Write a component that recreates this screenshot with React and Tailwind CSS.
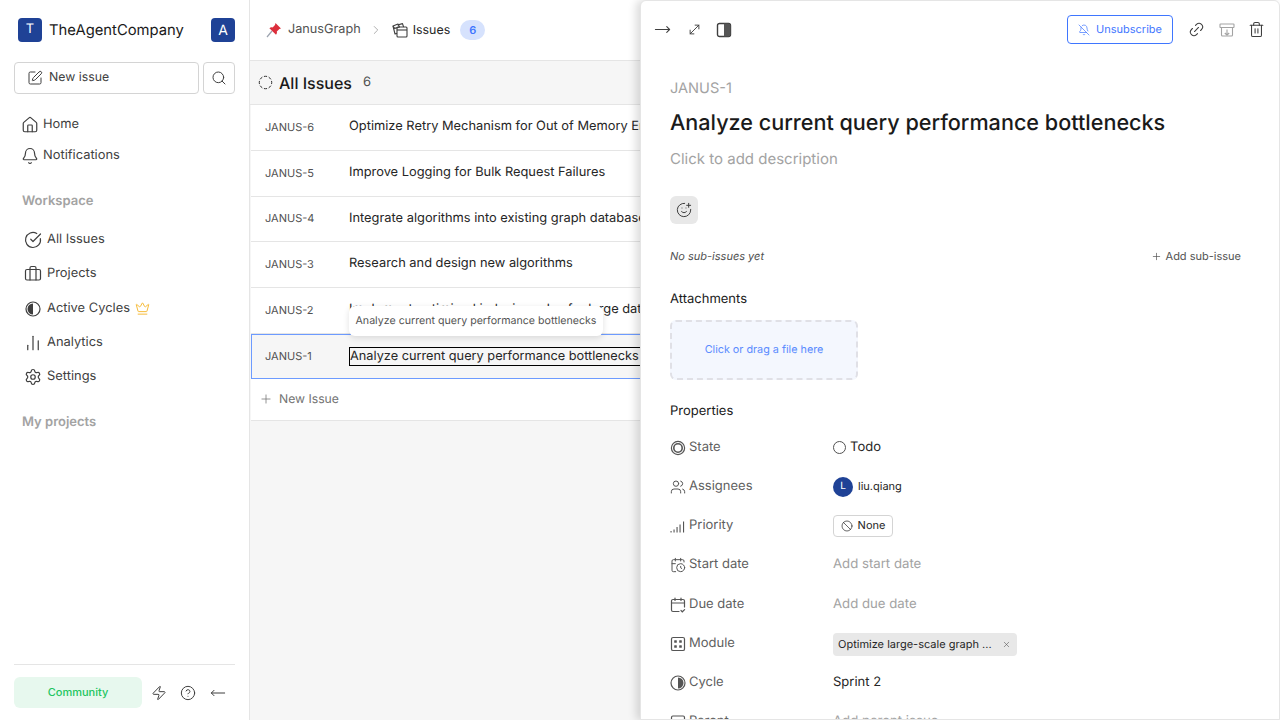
import {
  SquarePen, Search, House, Bell, CircleCheckBig, Briefcase, ChartNoAxesColumn, Settings, Crown,
  Zap, CircleHelp, ChevronRight, CircleDashed, Plus, MoveRight, MoveLeft, MoveDiagonal, BellOff, Link2, Trash2,
  SmilePlus, Users, CalendarClock, Ban, X,
} from "lucide-react";

function HalfCircle({ side = "left", size = 16, className = "" }) {
  const d = side === "left" ? "M8 2.5 A5.5 5.5 0 0 0 8 13.5 Z" : "M8 2.5 A5.5 5.5 0 0 1 8 13.5 Z";
  return (
    <svg width={size} height={size} viewBox="0 0 16 16" className={`shrink-0 ${className}`}>
      <circle cx="8" cy="8" r="7" fill="none" stroke="currentColor" strokeWidth="1.2" />
      <path d={d} fill="currentColor" />
    </svg>
  );
}

const ActiveCyclesIcon = () => <HalfCircle side="left" />;

const NAV_TOP = [
  { icon: House, label: "Home" },
  { icon: Bell, label: "Notifications" },
];

const NAV_WORKSPACE = [
  { icon: CircleCheckBig, label: "All Issues", h: "h-[34px]" },
  { icon: Briefcase, label: "Projects", h: "h-[34px]" },
  { icon: ActiveCyclesIcon, label: "Active Cycles", crown: true, h: "h-[35px]" },
  { icon: ChartNoAxesColumn, label: "Analytics", h: "h-[34px]" },
  { icon: Settings, label: "Settings", h: "h-[34px]" },
];

const ISSUES = [
  { id: "JANUS-6", title: "Optimize Retry Mechanism for Out of Memory Errors", h: "h-[46px]" },
  { id: "JANUS-5", title: "Improve Logging for Bulk Request Failures", h: "h-[46px]" },
  { id: "JANUS-4", title: "Integrate algorithms into existing graph database", h: "h-[45px]" },
  { id: "JANUS-3", title: "Research and design new algorithms", h: "h-[46px]" },
  { id: "JANUS-2", title: "Implement optimized indexing rules for large data", h: "h-[46px]" },
];

function PinIcon() {
  return (
    <svg width="16" height="16" viewBox="0 0 16 16">
      <path d="M1 15 L6 9" stroke="#9ca3af" strokeWidth="1.2" />
      <path d="M9.5 1 L15 6.5 L13.4 7 L10.8 9.6 C11.2 11 10.8 12 10 12.8 L3.4 6.2 C4.2 5.4 5.4 5 6.6 5.4 L9 3 Z" fill="#dc2f3c" />
    </svg>
  );
}

function IssuesIcon() {
  return (
    <svg width="16" height="16" viewBox="0 0 16 16" fill="none" stroke="#3f3f3f" strokeWidth="1.1" strokeLinejoin="round">
      <path d="M1 4 L6 2 L7.5 5 L2.6 6.4 Z" />
      <path d="M1 4 L3 12 L5 11.4" />
      <path d="M5.5 3 L10.5 1.6 L11.6 5" />
      <rect x="5" y="5" width="10" height="10" rx="1" />
      <path d="M5 8 H15" />
    </svg>
  );
}

function PanelIcon() {
  return (
    <svg width="16" height="16" viewBox="0 0 16 16">
      <rect x="1.5" y="1.5" width="13" height="13" rx="2" fill="none" stroke="#3f3f3f" strokeWidth="1.4" />
      <path d="M8 1.5 H12.5 A2 2 0 0 1 14.5 3.5 V12.5 A2 2 0 0 1 12.5 14.5 H8 Z" fill="#555" />
    </svg>
  );
}

function ArchiveIcon() {
  return (
    <svg width="16" height="16" viewBox="0 0 16 16" fill="none" stroke="#a3a3a3" strokeWidth="1.1" strokeLinejoin="round">
      <rect x="1" y="2" width="14" height="3.5" rx="0.6" />
      <path d="M2.5 5.5 V13 A1 1 0 0 0 3.5 14 H12.5 A1 1 0 0 0 13.5 13 V5.5" />
      <path d="M8 7.5 V13 M5.8 11 L8 13.2 L10.2 11" />
    </svg>
  );
}

function StateIcon() {
  return (
    <svg width="16" height="16" viewBox="0 0 16 16" fill="none" stroke="#555" className="shrink-0">
      <circle cx="8" cy="8" r="6.6" strokeWidth="1.2" />
      <circle cx="8" cy="8" r="4.2" strokeWidth="1.6" />
    </svg>
  );
}

function PriorityIcon() {
  return (
    <svg width="16" height="16" viewBox="0 0 16 16" fill="#555" className="shrink-0">
      <rect x="0.5" y="13" width="1.1" height="1.5" />
      <rect x="3.5" y="11.5" width="1.1" height="3" />
      <rect x="6.5" y="9" width="1.1" height="5.5" />
      <rect x="9.5" y="6.5" width="1.1" height="8" />
      <rect x="13" y="3.5" width="1.1" height="11" />
    </svg>
  );
}

function DueIcon() {
  return (
    <svg width="16" height="16" viewBox="0 0 16 16" fill="none" stroke="#555" strokeWidth="1.2" strokeLinecap="round" className="shrink-0">
      <path d="M9 14.5 H3 A1.5 1.5 0 0 1 1.5 13 V4 A1.5 1.5 0 0 1 3 2.5 H13 A1.5 1.5 0 0 1 14.5 4 V10" />
      <path d="M1.5 6 H14.5 M5 1 V3.5 M11 1 V3.5" />
      <path d="M11 13.5 L12.3 14.8 L14.6 12.6" />
    </svg>
  );
}

function ModuleIcon() {
  return (
    <svg width="16" height="16" viewBox="0 0 16 16" className="shrink-0">
      <rect x="1.5" y="1.5" width="13" height="13" rx="1.6" fill="none" stroke="#555" strokeWidth="1.2" />
      <rect x="4.2" y="4.2" width="2.6" height="2.6" rx="0.5" fill="#555" />
      <rect x="9.2" y="4.2" width="2.6" height="2.6" rx="0.5" fill="#555" />
      <rect x="4.2" y="9.2" width="2.6" height="2.6" rx="0.5" fill="#555" />
      <rect x="9.2" y="9.2" width="2.6" height="2.6" rx="0.5" fill="#555" />
    </svg>
  );
}

function ParentIcon() {
  return (
    <svg width="16" height="16" viewBox="0 0 16 16" fill="none" stroke="#555" strokeWidth="1.2" className="shrink-0">
      <rect x="1.5" y="2" width="13" height="12" rx="1.4" />
    </svg>
  );
}

function NavItem({ icon: Icon, label, crown, h, gap = "gap-[5px]", pad = "pl-[24px]" }) {
  return (
    <div className={`flex items-center ${gap} ${pad} ${h} text-[12.9px] text-[#3f3f3f]`}>
      <span className="w-[18px] h-[18px] flex items-center justify-center shrink-0">
        <Icon size={18} strokeWidth={1.6} />
      </span>
      <span>{label}</span>
      {crown && <Crown size={15} strokeWidth={1.5} className="text-[#f5b82e]" />}
    </div>
  );
}

function Sidebar() {
  return (
    <aside className="w-[250px] shrink-0 h-full flex flex-col border-r border-[#e5e5e5] bg-white">
      <div className="flex items-center justify-between h-[60px] pl-[18px] pr-[14px]">
        <div className="flex items-center gap-[7px]">
          <div className="w-6 h-6 rounded bg-[#1f4296] text-white text-[13px] flex items-center justify-center">T</div>
          <span className="text-[14.8px] text-[#1a1a1a]">TheAgentCompany</span>
        </div>
        <div className="w-6 h-6 rounded bg-[#1f4296] text-white text-[14px] flex items-center justify-center">A</div>
      </div>
      <div className="flex gap-1 px-[14px] mt-[2px]">
        <div className="flex-1 h-8 flex items-center gap-[6px] pl-3 rounded border border-[#d4d4d4] text-[12.3px] text-[#3f3f3f] pb-px">
          <SquarePen size={16} strokeWidth={1.5} />
          <span>New issue</span>
        </div>
        <div className="w-8 h-8 rounded border border-[#d4d4d4] flex items-center justify-center text-[#3f3f3f]">
          <Search size={16} strokeWidth={1.5} />
        </div>
      </div>
      <div className="mt-[15px]">
        {NAV_TOP.map((n) => (
          <NavItem key={n.label} {...n} h="h-[31px]" pad="pl-[21px]" gap="gap-[4px]" />
        ))}
      </div>
      <div className="mt-[20px] pl-[22px] text-[13px] font-semibold text-[#a3a3a3] h-[20px] leading-[20px]">Workspace</div>
      <div className="mt-[12px]">
        {NAV_WORKSPACE.map((n) => (
          <NavItem key={n.label} {...n} />
        ))}
      </div>
      <div className="mt-[18px] pl-[22px] text-[13px] font-semibold text-[#a3a3a3] h-[20px] leading-[20px]">My projects</div>
      <div className="mt-auto mx-[14px] border-t border-[#e5e5e5] h-[56px] flex items-center">
        <div className="w-[128px] h-[31px] rounded-md bg-[#e7f8ee] text-[#22c55e] text-[11px] font-medium flex items-center justify-center">Community</div>
        <Zap size={16} strokeWidth={1.5} className="ml-[9px] text-[#3f3f3f]" />
        <CircleHelp size={16} strokeWidth={1.5} className="ml-[13px] text-[#3f3f3f]" />
        <MoveLeft size={16} strokeWidth={1.5} className="ml-[14px] text-[#3f3f3f]" />
      </div>
    </aside>
  );
}

function IssueList() {
  return (
    <main className="flex-1 min-w-0 h-full flex flex-col bg-[#f6f6f6]">
      <div className="h-[61px] shrink-0 bg-white border-b border-[#e5e5e5] flex items-center pl-4">
        <PinIcon />
        <span className="ml-[6px] text-[12.7px] text-[#525252]">JanusGraph</span>
        <ChevronRight size={14} strokeWidth={1.5} className="ml-[8px] text-[#a3a3a3]" />
        <span className="ml-[9px]"><IssuesIcon /></span>
        <span className="ml-[5px] text-[12.4px] text-[#262626]">Issues</span>
        <span className="ml-[10px] w-[25px] h-5 rounded-full bg-[#d6e2fd] text-[#3f76ff] text-[11px] font-semibold flex items-center justify-center">6</span>
      </div>
      <div className="h-[44px] shrink-0 border-b border-[#e5e5e5] flex items-center pl-2 text-[#1a1a1a]">
        <CircleDashed size={15} strokeWidth={1.5} className="text-[#262626]" />
        <span className="ml-[6px] text-[16px] font-medium">All Issues</span>
        <span className="ml-[11px] text-[13px] text-[#525252]">6</span>
      </div>
      <div className="ml-px">
        {ISSUES.map((it) => (
          <div key={it.id} className={`${it.h} bg-white border-b border-[#e5e5e5] flex items-center pl-[14px] pb-px overflow-hidden`}>
            <span className="w-[84px] shrink-0 text-[11px] text-[#525252]">{it.id}</span>
            <span className="text-[12.85px] text-[#262626] whitespace-nowrap">{it.title}</span>
          </div>
        ))}
        <div className="h-[45px] bg-[#f6f6f6] border border-[#6d9bff] flex items-center pl-[13px] overflow-hidden relative">
          <span className="w-[84px] shrink-0 text-[11px] text-[#525252]">JANUS-1</span>
          <span className="h-[19px] border border-black pr-20 flex items-center text-[12.75px] text-[#262626] whitespace-nowrap">Analyze current query performance bottlenecks</span>
        </div>
        <div className="h-[42px] bg-white border-b border-[#e5e5e5] flex items-center pl-[8px] pb-px text-[12.2px] text-[#737373]">
          <Plus size={14} strokeWidth={1.3} />
          <span className="ml-[6px]">New Issue</span>
        </div>
      </div>
    </main>
  );
}

function Prop({ icon, label, h = "h-[39px]", children }) {
  return (
    <div className={`flex items-center ${h}`}>
      <div className="w-[163px] shrink-0 flex items-center gap-[3px] text-[13px] text-[#5f5f5f]">
        {icon}
        <span>{label}</span>
      </div>
      <div className="min-w-0 flex items-center text-[13px]">{children}</div>
    </div>
  );
}

function PeekPanel() {
  const icn = "shrink-0 text-[#555]";
  return (
    <section className="absolute top-0 right-0 bottom-0 w-[640px] bg-white border border-[#e5e5e5] rounded-t-md overflow-hidden shadow-[-4px_0_8px_rgba(0,0,0,0.14)] z-20">
      <div className="h-[57px] flex items-center pl-[13px] pr-[14px] text-[#3f3f3f]">
        <MoveRight size={17} strokeWidth={1.5} />
        <MoveDiagonal size={15} strokeWidth={1.5} className="ml-[16px]" />
        <span className="ml-[14px]"><PanelIcon /></span>
        <div className="ml-auto mr-px h-[29px] w-[106px] rounded border border-[#3f76ff] text-[#3f76ff] text-[11px] flex items-center justify-center gap-[6px]">
          <BellOff size={12} strokeWidth={1.4} />
          <span>Unsubscribe</span>
        </div>
        <Link2 size={17} strokeWidth={1.5} className="ml-[14px] -rotate-45" />
        <span className="ml-[14px]"><ArchiveIcon /></span>
        <Trash2 size={17} strokeWidth={1.5} className="ml-[13px]" />
      </div>
      <div className="pl-[29px] pr-[38px]">
        <div className="mt-[20px] h-[20px] leading-[20px] text-[14.6px] text-[#a3a3a3]">JANUS-1</div>
        <div className="mt-[9px] h-[32px] leading-[32px] text-[21.6px] font-medium text-[#1a1a1a]">Analyze current query performance bottlenecks</div>
        <div className="mt-[8px] h-[24px] leading-[24px] text-[15px] text-[#a3a3a3]">Click to add description</div>
        <div className="mt-[25px] w-7 h-7 rounded-md bg-[#e8e8e8] flex items-center justify-center text-[#3f3f3f]">
          <SmilePlus size={16} strokeWidth={1.5} />
        </div>
        <div className="mt-[22px] h-[20px] flex items-center justify-between text-[11px]">
          <span className="italic text-[#525252]">No sub-issues yet</span>
          <span className="flex items-center gap-1 text-[#525252]"><Plus size={11} strokeWidth={1.5} />Add sub-issue</span>
        </div>
        <div className="mt-[23px] h-[20px] leading-[20px] text-[13px] text-[#1a1a1a]">Attachments</div>
        <div className="mt-[11px] w-[188px] h-[60px] rounded-md border-2 border-dashed border-[#e0e0e6] bg-[#f4f7fe] text-[#5b8cff] text-[10.8px] flex items-center justify-center">Click or drag a file here</div>
        <div className="mt-[21px] h-[20px] leading-[20px] text-[13px] text-[#1a1a1a]">Properties</div>
        <div className="mt-[7px]">
          <Prop icon={<StateIcon />} label="State">
            <span className="w-[13px] h-[13px] rounded-full border border-[#525252]" />
            <span className="ml-[4px] text-[#262626]">Todo</span>
          </Prop>
          <Prop icon={<Users size={16} strokeWidth={1.5} className={icn} />} label="Assignees">
            <span className="w-5 h-5 rounded-full bg-[#1f4296] text-white text-[10px] flex items-center justify-center">L</span>
            <span className="ml-[5px] text-[11px] text-[#262626]">liu.qiang</span>
          </Prop>
          <Prop icon={<PriorityIcon />} label="Priority">
            <span className="w-[60px] h-[22px] rounded border border-[#d4d4d4] flex items-center justify-center gap-[5px] text-[11px] text-[#262626]">
              <Ban size={12} strokeWidth={1.4} />None
            </span>
          </Prop>
          <Prop icon={<CalendarClock size={16} strokeWidth={1.5} className={icn} />} label="Start date">
            <span className="text-[13.2px] text-[#a3a3a3]">Add start date</span>
          </Prop>
          <Prop icon={<DueIcon />} label="Due date" h="h-[41px]">
            <span className="text-[13.2px] text-[#a3a3a3]">Add due date</span>
          </Prop>
          <Prop icon={<ModuleIcon />} label="Module" h="h-[38px]">
            <span className="w-[184px] h-[23px] rounded bg-[#e8e8e8] flex items-center justify-between px-[5px] text-[11px] text-[#262626]">
              Optimize large-scale graph ...
              <X size={9} strokeWidth={1.5} className="mr-[1px] text-[#525252]" />
            </span>
          </Prop>
          <Prop icon={<HalfCircle side="right" className="text-[#555]" />} label="Cycle">
            <span className="text-[#262626]">Sprint 2</span>
          </Prop>
          <Prop icon={<ParentIcon />} label="Parent">
            <span className="text-[13.2px] text-[#a3a3a3]">Add parent issue</span>
          </Prop>
        </div>
      </div>
    </section>
  );
}

export default function App() {
  return (
    <div className="relative w-[1280px] h-[720px] overflow-hidden flex bg-white font-['Inter',sans-serif] [text-rendering:geometricPrecision]">
      <Sidebar />
      <IssueList />
      {/* tooltip hangs over the JANUS-2 row */}
      <div className="absolute left-[349px] top-[306px] h-[30px] w-[254px] rounded-md bg-white shadow-[0_2px_6px_rgba(0,0,0,0.12)] text-[10.65px] text-[#525252] flex items-center justify-center z-10">
        Analyze current query performance bottlenecks
      </div>
      <PeekPanel />
    </div>
  );
}
